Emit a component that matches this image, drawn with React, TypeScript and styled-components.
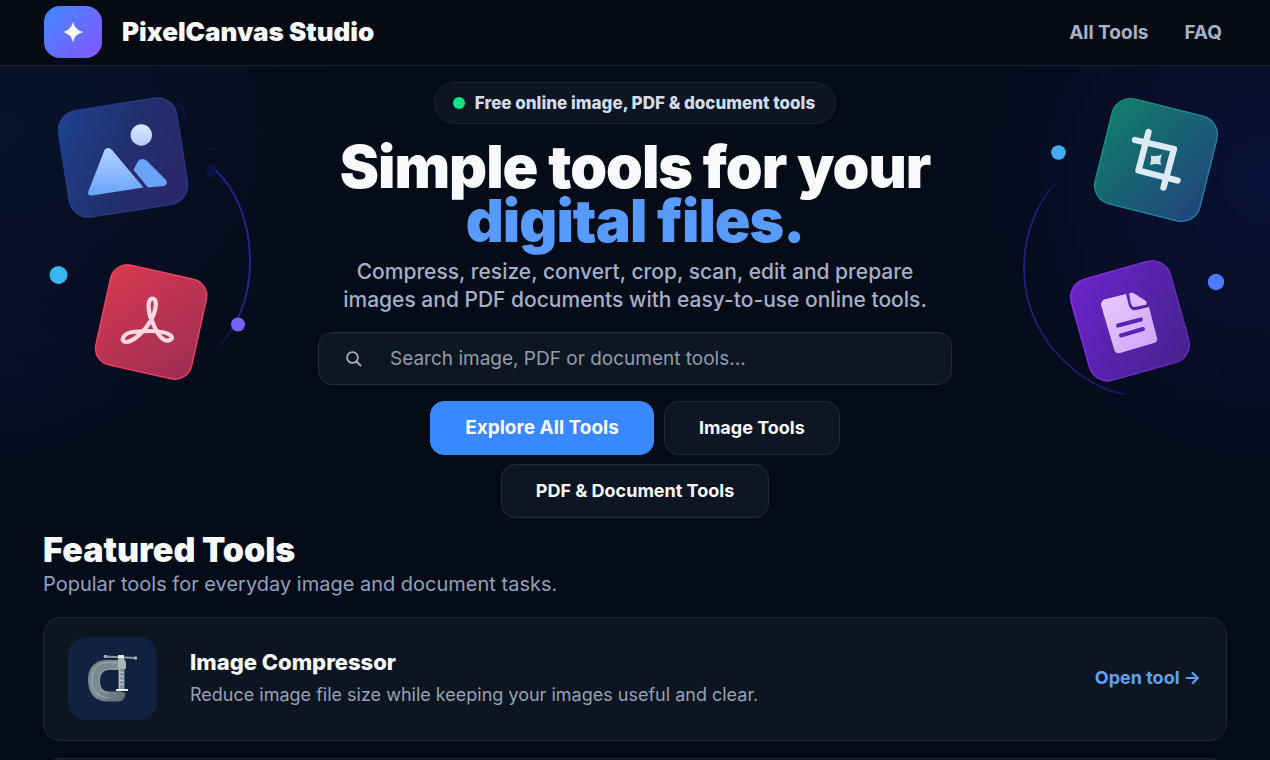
import React from "react";
import styled, { createGlobalStyle } from "styled-components";

const GlobalStyle = createGlobalStyle`
  *, *::before, *::after { box-sizing: border-box; }
  html { background: #050b17; }
  body {
    margin: 0;
    font-family: Inter, "Liberation Sans", sans-serif;
    color: #f8fafc;
    overflow-x: hidden;
  }
  h1, h2, h3, p { margin: 0; }
  a { color: inherit; text-decoration: none; }
`;

const Page = styled.div`
  min-height: 100vh;
  background:
    radial-gradient(ellipse 400px 340px at 0% 130px, rgba(12, 32, 84, 0.34), transparent),
    radial-gradient(ellipse 340px 340px at 100% 180px, rgba(14, 24, 96, 0.44), transparent),
    radial-gradient(ellipse 240px 160px at 0% 380px, rgba(22, 16, 70, 0.22), transparent),
    #050b17;
`;

const Header = styled.header`
  display: flex;
  align-items: center;
  justify-content: space-between;
  height: 66px;
  padding: 0 48px 2px 44px;
  background: #050a13;
  border-bottom: 1px solid #1b2633;
`;

const Brand = styled.a`
  display: flex;
  align-items: center;
  gap: 20px;
  font-size: 26px;
  line-height: 32px;
  font-weight: 900;
`;

const BrandMark = styled.span`
  display: grid;
  place-items: center;
  width: 58px;
  height: 52px;
  border-radius: 16px;
  background: linear-gradient(135deg, #3f8bff, #8654ff);
`;

const Nav = styled.nav`
  display: flex;
  gap: 36px;
  padding-top: 2px;
  font-size: 19px;
  line-height: 24px;
  font-weight: 700;
  color: #a5b2ca;
`;

const Hero = styled.section`
  display: grid;
  grid-template-columns: 1fr minmax(0, 634px) 1fr;
`;

const Art = styled.svg<{ $side: "start" | "end" }>`
  display: block;
  justify-self: ${(p) => p.$side};
`;

const HeroBody = styled.div`
  display: flex;
  flex-direction: column;
  align-items: center;
  padding-top: 16px;
  text-align: center;
`;

const Pill = styled.p`
  display: flex;
  align-items: center;
  gap: 10px;
  height: 42px;
  padding: 0 20px 0 18px;
  border: 1px solid #1a2532;
  border-radius: 21px;
  background: #0c1521;
  color: #d3dcea;
  font-size: 17px;
  font-weight: 800;
`;

const StatusDot = styled.span`
  width: 12px;
  height: 12px;
  border-radius: 50%;
  background: #0be487;
`;

const Title = styled.h1`
  margin-top: 16px;
  font-size: 59px;
  line-height: 54px;
  font-weight: 900;
  letter-spacing: -1px;
  white-space: nowrap;
`;

const Accent = styled.span`
  display: block;
  color: #579bff;
`;

const Lead = styled.p`
  max-width: 600px;
  margin-top: 10px;
  color: #a3b0c9;
  font-size: 21px;
  line-height: 28px;
  font-weight: 500;
`;

const Search = styled.label`
  display: flex;
  align-items: center;
  gap: 28px;
  width: 100%;
  height: 53px;
  margin-top: 18px;
  padding: 0 27px;
  border: 1px solid #212c39;
  border-radius: 14px;
  background: #0d1623;
  color: #a5afbe;
`;

const SearchInput = styled.input`
  flex: 1;
  min-width: 0;
  padding: 0;
  border: 0;
  outline: 0;
  background: none;
  color: #f8fafc;
  font: inherit;
  font-size: 19px;
  line-height: 24px;
  &::placeholder { color: #929cab; opacity: 1; }
`;

const Actions = styled.div`
  display: flex;
  flex-wrap: wrap;
  justify-content: center;
  gap: 9px 10px;
  width: 100%;
  max-width: 480px;
  margin-top: 16px;
`;

const Button = styled.button<{ $primary?: boolean }>`
  height: 54px;
  padding: 0 34px 2px;
  border: 1px solid ${(p) => (p.$primary ? "#3a8aff" : "#222c38")};
  border-radius: 14px;
  background: ${(p) => (p.$primary ? "#3a88ff" : "#0d1622")};
  color: #f8fafc;
  font: inherit;
  font-size: ${(p) => (p.$primary ? 19 : 18)}px;
  font-weight: 700;
`;

const Featured = styled.section`
  padding: 14px 43px 0;
`;

const SectionTitle = styled.h2`
  font-size: 34px;
  line-height: 36px;
  font-weight: 900;
`;

const SectionText = styled.p`
  margin-top: 2px;
  color: #92a1bb;
  font-size: 20px;
  line-height: 28px;
`;

const CardList = styled.div`
  display: grid;
  gap: 17px;
  margin-top: 19px;
`;

const Card = styled.article`
  display: flex;
  align-items: center;
  min-height: 124px;
  padding: 0 25px 2px 24px;
  border: 1px solid #1e2936;
  border-radius: 18px;
  background: #0c1520;
`;

const CardIcon = styled.span`
  display: grid;
  place-items: center;
  width: 89px;
  height: 83px;
  margin-right: 33px;
  border-radius: 18px;
  background: #112140;
`;

const CardBody = styled.div`
  flex: 1;
`;

const CardTitle = styled.h3`
  font-size: 22px;
  line-height: 28px;
  font-weight: 800;
`;

const CardText = styled.p`
  margin-top: 6px;
  color: #95a2b6;
  font-size: 18px;
  line-height: 26px;
`;

const CardLink = styled.a`
  color: #60a0fa;
  font-size: 18px;
  line-height: 24px;
  font-weight: 700;
`;

function LeftArt() {
  return (
    <Art $side="start" width="318" height="340" viewBox="0 66 318 340" aria-hidden="true">
      <defs>
        <linearGradient id="blueTile" x1="0" y1="0" x2="1" y2="0.5">
          <stop offset="0" stopColor="#1e4290" />
          <stop offset="0.6" stopColor="#21306f" />
          <stop offset="1" stopColor="#2a286a" />
        </linearGradient>
        <linearGradient id="redTile" x1="0" y1="0" x2="1" y2="1">
          <stop offset="0" stopColor="#d83a50" />
          <stop offset="1" stopColor="#9c2c54" />
        </linearGradient>
        <linearGradient id="redEdge" x1="0" y1="0" x2="1" y2="1">
          <stop offset="0" stopColor="#f24460" />
          <stop offset="1" stopColor="#e83c60" />
        </linearGradient>
        <linearGradient id="peak" x1="0" y1="0" x2="0" y2="1">
          <stop offset="0" stopColor="#b9d2ff" />
          <stop offset="1" stopColor="#66a4fb" />
        </linearGradient>
        <linearGradient id="sun" x1="0" y1="0" x2="0" y2="1">
          <stop offset="0" stopColor="#dce7fd" />
          <stop offset="1" stopColor="#b4cbfa" />
        </linearGradient>
        <linearGradient id="leftArc" gradientUnits="userSpaceOnUse" x1="0" y1="165" x2="0" y2="350">
          <stop offset="0" stopColor="#20208c" />
          <stop offset="0.5" stopColor="#1e2690" />
          <stop offset="0.8" stopColor="#1e2680" />
          <stop offset="1" stopColor="#202a88" stopOpacity="0.1" />
        </linearGradient>
      </defs>
      <path d="M214 169C238 190 250 225 250 262C250 299 238 326 217 349" fill="none" stroke="url(#leftArc)" strokeWidth="2" />
      <ellipse cx="211" cy="171" rx="5" ry="7" fill="#10154a" opacity="0.7" />
      <path d="M206 149h9" stroke="#15164e" />
      <path d="M176 103q10 2 8 16" stroke="#0d1142" strokeWidth="3" fill="none" />
      <rect x="63" y="103.500" width="120" height="108" rx="20" fill="url(#blueTile)" stroke="#26408c" transform="rotate(-9 123 157.5)" />
      <circle cx="141.300" cy="135" r="10.700" fill="url(#sun)" />
      <path d="M104.500 150Q108 146 112 150L143.500 187.500L92 195.500Q87 196 88.500 191Z" fill="url(#peak)" />
      <path d="M138 161Q142.500 157 147 161L166 180Q168.500 184 164 186L148 187.500L133.500 170Z" fill="#69a3fa" />
      <rect x="102" y="271" width="98" height="102" rx="17" fill="url(#redTile)" stroke="url(#redEdge)" strokeWidth="1.500" transform="rotate(12.500 151 322.500)" />
      <path
        d="M152.500 298.500C158 298.500 156 312 150.500 321C145.500 330 134 342 125.500 342C120 341 123 333 133 332C144 331 153 330 161 332C170 333 175 338 170 340C163 343 157 334 152.500 322C147.500 312 147 298.500 152.500 298.500Z"
        fill="none" stroke="#fbd9e2" strokeWidth="4.200" strokeLinejoin="round"
      />
      <circle cx="58.500" cy="275" r="9" fill="#38b6ef" />
      <circle cx="238" cy="324.500" r="7" fill="#7964f5" />
    </Art>
  );
}

function RightArt() {
  return (
    <Art $side="end" width="318" height="340" viewBox="952 66 318 340" aria-hidden="true">
      <defs>
        <linearGradient id="greenTile" x1="0" y1="0.200" x2="1" y2="0.800">
          <stop offset="0" stopColor="#127a6c" />
          <stop offset="1" stopColor="#1f477a" />
        </linearGradient>
        <linearGradient id="greenEdge" x1="0" y1="0" x2="1" y2="0.400">
          <stop offset="0" stopColor="#169379" />
          <stop offset="1" stopColor="#2287a4" />
        </linearGradient>
        <linearGradient id="purpleTile" x1="0" y1="0" x2="1" y2="1">
          <stop offset="0" stopColor="#6c23cb" />
          <stop offset="1" stopColor="#44228c" />
        </linearGradient>
        <linearGradient id="purpleEdge" x1="0" y1="0" x2="1" y2="0.700">
          <stop offset="0" stopColor="#8c30e8" />
          <stop offset="1" stopColor="#6529b4" />
        </linearGradient>
        <linearGradient id="sheet" x1="0" y1="0" x2="1" y2="1">
          <stop offset="0" stopColor="#e8cdfd" />
          <stop offset="1" stopColor="#cda2f8" />
        </linearGradient>
        <linearGradient id="rightArc" gradientUnits="userSpaceOnUse" x1="0" y1="178" x2="0" y2="395">
          <stop offset="0" stopColor="#241c88" stopOpacity="0.300" />
          <stop offset="0.150" stopColor="#241c88" />
          <stop offset="0.550" stopColor="#1c247e" />
          <stop offset="1" stopColor="#1a1c60" />
        </linearGradient>
      </defs>
      <path d="M1058 180C1037 202 1024 234 1024 268C1024 308 1042 344 1073 369C1089 382 1105 391 1124 394" fill="none" stroke="url(#rightArc)" strokeWidth="1.700" />
      <path d="M1178 400Q1200 391 1219 374" fill="none" stroke="#11123f" strokeWidth="1.500" opacity="0.700" />
      <rect x="1102" y="106" width="108" height="108" rx="19" fill="url(#greenTile)" stroke="url(#greenEdge)" strokeWidth="1.300" transform="rotate(14 1156 160)" />
      <g fill="none" stroke="#dcebf3" strokeWidth="6.400" strokeLinecap="round" strokeLinejoin="round">
        <path d="M1148.500 132L1138.500 170.500L1177.500 180.500" />
        <path d="M1135 140L1174 149L1163.500 187.500" />
      </g>
      <path d="M1151 155.500q5 1.500 11-1q-2.500 5-1 10.500q-5-2-11 0q1.500-5 1-9.500z" fill="#cfe6ec" />
      <rect x="1078.500" y="268.500" width="103" height="105" rx="19" fill="url(#purpleTile)" stroke="url(#purpleEdge)" strokeWidth="1.400" transform="rotate(-15.700 1129.500 321)" />
      <path d="M1106 299L1126 294L1129 306Q1131 311 1136 310L1149 307L1157 338Q1158 342 1154 343L1120 353Q1115 354 1114 349L1101 305Q1101 300 1106 299Z" fill="url(#sheet)" />
      <path d="M1129 293.500Q1132 292 1135 294L1146 301Q1148 304 1145 305L1134 307Q1132 307 1131 304Z" fill="#dfbdfc" />
      <path d="M1118 325.500L1141 319.500M1121 335.500L1143 329" stroke="#5526b2" strokeWidth="4" strokeLinecap="round" />
      <circle cx="1058.500" cy="152.500" r="7.300" fill="#40adf2" />
      <circle cx="1216" cy="282" r="8.200" fill="#4c79fd" />
    </Art>
  );
}

function SparkIcon() {
  return (
    <svg width="20" height="20" viewBox="0 0 20 20" aria-hidden="true">
      <path d="M10 0Q12 8 20 10Q12 12 10 20Q8 12 0 10Q8 8 10 0Z" fill="#f8fafc" />
    </svg>
  );
}

function SearchIcon() {
  return (
    <svg width="16" height="16" viewBox="0 0 16 16" fill="none" stroke="currentColor" strokeWidth="1.800" strokeLinecap="round" aria-hidden="true">
      <circle cx="6.500" cy="6.500" r="5.400" />
      <path d="M10.500 10.500L14.500 14.500" />
    </svg>
  );
}

function ClampIcon() {
  return (
    <svg width="52" height="52" viewBox="87 652 52 52" aria-hidden="true">
      <defs>
        <linearGradient id="clampBody" x1="0" y1="0" x2="1" y2="1">
          <stop offset="0" stopColor="#71838c" />
          <stop offset="0.500" stopColor="#7d8c92" />
          <stop offset="1" stopColor="#5c6d78" />
        </linearGradient>
      </defs>
      <path d="M121 660H107C95 660 88 667 88 680C88 694 96 701.500 107 701.500H119Q125 701 125.500 693L121 691.500H110C103 692 100 688 100 681C100 674 103 670 109 670H121Z" fill="url(#clampBody)" />
      <path d="M118 662.500H108Q92 663 92 680Q92 696 108 698" fill="none" stroke="#a0adb0" strokeWidth="1.500" opacity="0.700" />
      <path d="M121 669H109Q99 670 99 681Q99 691 108 692.500" fill="none" stroke="#9daab0" strokeWidth="1.200" opacity="0.600" />
      <path d="M105 656.500L136 658" stroke="#8b999f" strokeWidth="2" />
      <circle cx="105.500" cy="656.500" r="1.800" fill="#a4b0b5" />
      <circle cx="135.500" cy="658" r="1.800" fill="#a4b0b5" />
      <path d="M118 655h6v4l2 3v6l-2 2h-6z" fill="#a9b6b8" />
      <path d="M118 655h6v3h-6z" fill="#e5edef" />
      <path d="M118.500 669h6v20h-6z" fill="#87979d" />
      <path d="M119.500 670v19" stroke="#b3bfc2" />
      <path d="M120 672l4 1m-4 3l4 1m-4 3l4 1m-4 3l4 1" stroke="#c3cdd0" />
      <path d="M116 689h12v2h-12z" fill="#e5edef" />
    </svg>
  );
}

export default function App() {
  return (
    <Page>
      <GlobalStyle />
      <Header>
        <Brand href="#">
          <BrandMark><SparkIcon /></BrandMark>
          PixelCanvas Studio
        </Brand>
        <Nav>
          <a href="#tools">All Tools</a>
          <a href="#faq">FAQ</a>
        </Nav>
      </Header>
      <main>
        <Hero>
          <LeftArt />
          <HeroBody>
            <Pill><StatusDot />Free online image, PDF &amp; document tools</Pill>
            <Title>Simple tools for your <Accent>digital files.</Accent></Title>
            <Lead>
              Compress, resize, convert, crop, scan, edit and prepare images and PDF documents with easy-to-use online tools.
            </Lead>
            <Search>
              <SearchIcon />
              <SearchInput type="search" aria-label="Search tools" placeholder="Search image, PDF or document tools..." />
            </Search>
            <Actions>
              <Button type="button" $primary>Explore All Tools</Button>
              <Button type="button">Image Tools</Button>
              <Button type="button">PDF &amp; Document Tools</Button>
            </Actions>
          </HeroBody>
          <RightArt />
        </Hero>
        <Featured id="tools">
          <SectionTitle>Featured Tools</SectionTitle>
          <SectionText>Popular tools for everyday image and document tasks.</SectionText>
          <CardList>
            <Card>
              <CardIcon><ClampIcon /></CardIcon>
              <CardBody>
                <CardTitle>Image Compressor</CardTitle>
                <CardText>Reduce image file size while keeping your images useful and clear.</CardText>
              </CardBody>
              <CardLink href="#image-compressor">Open tool →</CardLink>
            </Card>
            <Card />
          </CardList>
        </Featured>
      </main>
    </Page>
  );
}
